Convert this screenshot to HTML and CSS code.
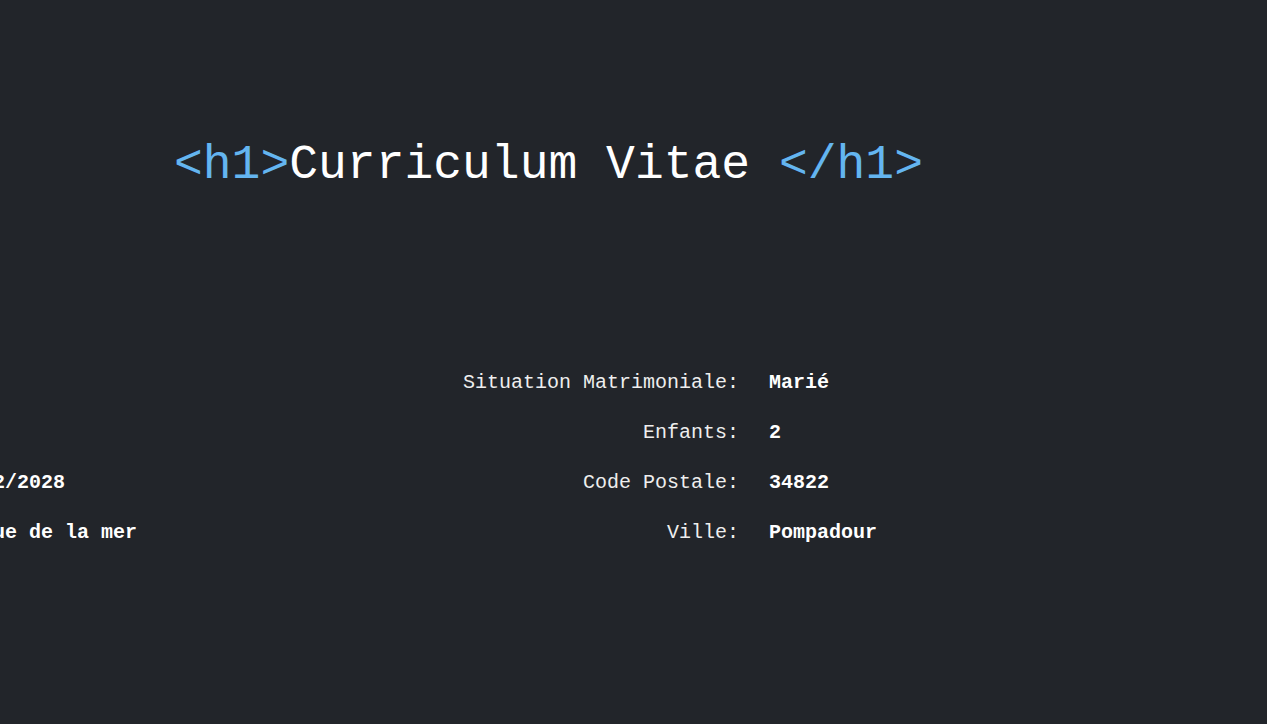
FILE: index.html
```html
<!DOCTYPE html>
<html lang="fr">
<head>
<meta charset="utf-8">
<title>Curriculum Vitae</title>
<link rel="stylesheet" href="styles.css">
</head>
<body>
<header class="title-wrap">
  <h1 class="title"><span class="tag">&lt;h1&gt;</span>Curriculum Vitae <span class="tag">&lt;/h1&gt;</span></h1>
</header>
<main class="info">
  <section class="col col-left">
    <span class="label">Nom:</span><span class="value">Doe</span>
    <span class="label">Prénom:</span><span class="value">John</span>
    <span class="label">Date de Naissance:</span><span class="value">12/12/2028</span>
    <span class="label">Adresse:</span><span class="value">12 rue de la mer</span>
  </section>
  <section class="col col-right">
    <span class="label">Situation Matrimoniale:</span><span class="value">Marié</span>
    <span class="label">Enfants:</span><span class="value">2</span>
    <span class="label">Code Postale:</span><span class="value">34822</span>
    <span class="label">Ville:</span><span class="value">Pompadour</span>
  </section>
</main>
</body>
</html>
```
FILE: styles.css
```css
html, body {
  margin: 0;
  padding: 0;
  background: #22252a;
  overflow: hidden;
}
body {
  width: 1267px;
  height: 724px;
  color: #ffffff;
  font-family: "Liberation Mono", "Courier New", monospace;
}
.title-wrap {
  padding: 137px 0 0 174px;
}
.title {
  margin: 0;
  font-size: 48px;
  font-weight: normal;
  line-height: 56px;
  white-space: nowrap;
}
.tag {
  color: #64b5f0;
}
.info {
  display: flex;
  gap: 274px;
  margin-left: -365px;
  margin-top: 165px;
}
.col {
  display: grid;
  grid-template-columns: 280px 240px;
  column-gap: 30px;
  row-gap: 0;
  font-size: 20px;
  line-height: 50px;
  white-space: nowrap;
}
.label {
  text-align: right;
  color: #eeeeee;
}
.value {
  font-weight: bold;
}
```
